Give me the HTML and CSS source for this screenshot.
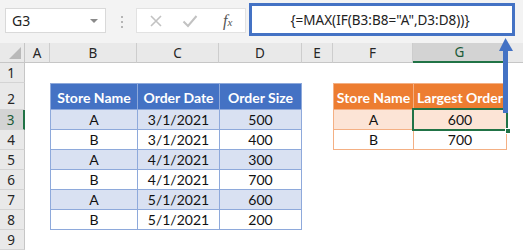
FILE: index.html
```html
<!DOCTYPE html>
<html lang="en">
<head>
  <meta charset="UTF-8" />
  <title>MAX IF - Excel</title>
  <link rel="stylesheet" href="styles.css">
</head>
<body>
  <div class="toolbar">
    <div class="namebox">
      <span>G3</span>
      <span class="dropdown"></span>
    </div>
    <div class="grip"><i></i><i></i><i></i></div>
    <div class="buttons">
      <svg class="btn" width="14" height="14" viewBox="0 0 14 14">
        <path d="M2 2 L12 12 M12 2 L2 12" stroke="#c2c2c2" stroke-width="1.6" fill="none"/>
      </svg>
      <svg class="btn" width="16" height="14" viewBox="0 0 16 14">
        <path d="M1.5 7.5 L6 12 L14.5 2" stroke="#c2c2c2" stroke-width="2" fill="none"/>
      </svg>
      <span class="fx">f<sub>x</sub></span>
    </div>
    <div class="formula">{=MAX(IF(B3:B8="A",D3:D8))}</div>
  </div>

  <div class="sheet">
    <div class="corner"><span class="tri"></span></div>
    <div class="colhead">A</div>
    <div class="colhead">B</div>
    <div class="colhead">C</div>
    <div class="colhead">D</div>
    <div class="colhead">E</div>
    <div class="colhead">F</div>
    <div class="colhead active">G</div>
    <div class="colhead filler"></div>

    <div class="rowhead r1">1</div>
    <div class="rowhead r2">2</div>
    <div class="rowhead r3 active">3</div>
    <div class="rowhead r4">4</div>
    <div class="rowhead r5">5</div>
    <div class="rowhead r6">6</div>
    <div class="rowhead r7">7</div>
    <div class="rowhead r8">8</div>
    <div class="rowhead r9">9</div>

    <div class="tbl blue">
      <div class="th">Store Name</div><div class="th">Order Date</div><div class="th">Order Size</div>
      <div class="td band">A</div><div class="td band">3/1/2021</div><div class="td band">500</div>
      <div class="td">B</div><div class="td">3/1/2021</div><div class="td">400</div>
      <div class="td band">A</div><div class="td band">4/1/2021</div><div class="td band">300</div>
      <div class="td">B</div><div class="td">4/1/2021</div><div class="td">700</div>
      <div class="td band">A</div><div class="td band">5/1/2021</div><div class="td band">600</div>
      <div class="td">B</div><div class="td">5/1/2021</div><div class="td">200</div>
    </div>

    <div class="tbl orange">
      <div class="th">Store Name</div><div class="th">Largest Order</div>
      <div class="td band">A</div><div class="td band selected">600</div>
      <div class="td">B</div><div class="td">700</div>
    </div>
  </div>

  <svg class="arrow" width="16" height="76" viewBox="0 0 16 76">
    <rect x="4" y="12" width="5" height="64" fill="#4472c4"/>
    <path d="M0 14 L6.5 1 L14 14 Z" fill="#4472c4"/>
  </svg>
</body>
</html>
```

FILE: styles.css
```css
body {
  margin: 0;
  width: 523px;
  height: 250px;
  overflow: hidden;
  background: #fff;
  font-family: 'Noto Sans', 'Open Sans', sans-serif;
  position: relative;
}

.toolbar {
  height: 43px;
  background: #f3f3f3;
  display: flex;
  align-items: flex-start;
  box-sizing: border-box;
}

.namebox {
  margin: 8px 0 0 5px;
  width: 101px;
  height: 25px;
  box-sizing: border-box;
  border: 1px solid #d9d9d9;
  background: #fff;
  display: flex;
  align-items: center;
  justify-content: space-between;
  padding: 0 6px 0 6px;
  font-size: 14px;
  color: #222;
}

.dropdown {
  width: 0;
  height: 0;
  border-left: 4px solid transparent;
  border-right: 4px solid transparent;
  border-top: 4px solid #8a8a8a;
  margin-right: 1px;
}

.grip {
  margin: 16px 0 0 15px;
  display: flex;
  flex-direction: column;
  gap: 3px;
}

.grip i {
  display: block;
  width: 2px;
  height: 2px;
  background: #b5b5b5;
}

.buttons {
  margin: 8px 0 0 13px;
  width: 110px;
  height: 25px;
  box-sizing: border-box;
  border: 1px solid #e2e2e2;
  background: #fff;
  display: flex;
  align-items: center;
  padding-left: 12px;
}

.buttons .btn {
  margin-right: 19px;
}

.fx {
  margin-left: 6px;
  font-family: 'Liberation Serif', serif;
  font-style: italic;
  font-size: 16px;
  color: #555;
  line-height: 1;
}

.fx sub {
  font-size: 11px;
  vertical-align: 0;
}

.formula {
  margin: 3px 0 0 3px;
  width: 266px;
  height: 33px;
  box-sizing: border-box;
  border: 3px solid #4472c4;
  background: #fff;
  display: flex;
  align-items: center;
  justify-content: center;
  font-size: 13.5px;
  color: #222;
  padding-right: 4px;
}

.sheet {
  display: grid;
  grid-template-columns: 25px 25px 87px 82px 83px 31px 80px 94px 1fr;
  grid-template-rows: 20px 20px 27px repeat(7, 20px);
}

.corner {
  grid-column: 1;
  grid-row: 1;
  background: #e9e9e9;
  border-right: 1px solid #c6c6c6;
  border-bottom: 1px solid #c6c6c6;
  position: relative;
}

.tri {
  position: absolute;
  right: 3px;
  bottom: 3px;
  width: 0;
  height: 0;
  border-left: 12px solid transparent;
  border-bottom: 12px solid #b9b9b9;
}

.colhead {
  grid-row: 1;
  background: #e9e9e9;
  border-right: 1px solid #cdcdcd;
  border-bottom: 1px solid #c6c6c6;
  font-size: 13.5px;
  color: #262626;
  display: flex;
  align-items: center;
  justify-content: center;
}

.colhead.filler {
  border-right: none;
}

.colhead.active {
  background: #d3d3d3;
  color: #1c5b38;
  border-bottom: 2px solid #217346;
}

.rowhead {
  grid-column: 1;
  background: #e9e9e9;
  border-right: 1px solid #c6c6c6;
  border-bottom: 1px solid #d4d4d4;
  font-size: 13.5px;
  color: #262626;
  display: flex;
  align-items: center;
  justify-content: center;
  padding-right: 2px;
}

.rowhead.r2 {
  align-items: flex-end;
  padding-bottom: 1px;
}

.rowhead.active {
  background: #d3d3d3;
  color: #1c5b38;
  border-right: 2px solid #217346;
}

.r1 { grid-row: 2; }
.r2 { grid-row: 3; }
.r3 { grid-row: 4; }
.r4 { grid-row: 5; }
.r5 { grid-row: 6; }
.r6 { grid-row: 7; }
.r7 { grid-row: 8; }
.r8 { grid-row: 9; }
.r9 { grid-row: 10; }

.tbl {
  display: grid;
  gap: 1px;
  padding: 1px;
  align-self: start;
  font-family: Lato, 'Open Sans', sans-serif;
  font-size: 14px;
  color: #111;
}

.tbl .th {
  color: #fff;
  font-weight: bold;
  display: flex;
  align-items: flex-end;
  justify-content: center;
  padding-bottom: 3px;
  white-space: nowrap;
}

.tbl .td {
  background: #fff;
  display: flex;
  align-items: center;
  justify-content: center;
}

.blue {
  grid-column: 3 / 6;
  grid-row: 3 / 10;
  grid-template-columns: 86px 81px 81px;
  grid-template-rows: 25px repeat(6, 19px);
  background: #8ea9db;
}

.blue .th { background: #4472c4; }
.blue .band { background: #d9e1f2; }

.orange {
  grid-column: 7 / 9;
  grid-row: 3 / 6;
  grid-template-columns: 79px 92px;
  grid-template-rows: 25px 19px 19px;
  background: #f4b084;
}

.orange .th { background: #ed7d31; }
.orange .band { background: #fce4d6; }

.selected {
  position: relative;
  outline: 2px solid #217346;
  outline-offset: 0;
}

.selected::after {
  content: "";
  position: absolute;
  right: -5px;
  bottom: -5px;
  width: 6px;
  height: 6px;
  background: #217346;
  border: 1px solid #fff;
  box-sizing: border-box;
}

.arrow {
  position: absolute;
  left: 499px;
  top: 37px;
}
```
